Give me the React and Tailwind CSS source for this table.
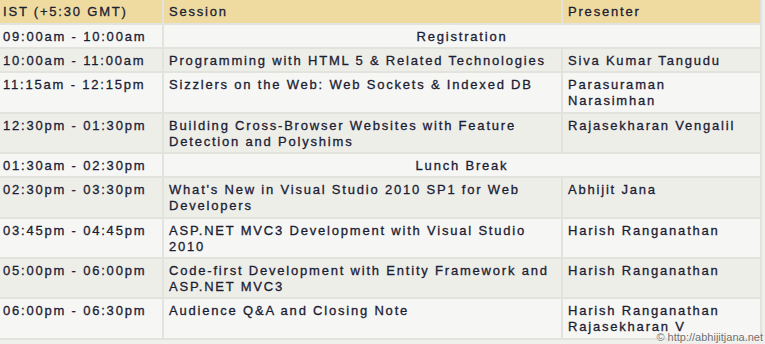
import React from "react"

const rows = [
  { time: "09:00am - 10:00am", span: "Registration", light: true },
  { time: "10:00am - 11:00am", session: ["Programming with HTML 5 & Related Technologies"], presenter: ["Siva Kumar Tangudu"] },
  { time: "11:15am - 12:15pm", session: ["Sizzlers on the Web: Web Sockets & Indexed DB"], presenter: ["Parasuraman", "Narasimhan"], light: true },
  { time: "12:30pm - 01:30pm", session: ["Building Cross-Browser Websites with Feature", "Detection and Polyshims"], presenter: ["Rajasekharan Vengalil"] },
  { time: "01:30am - 02:30pm", span: "Lunch Break", light: true },
  { time: "02:30pm - 03:30pm", session: ["What's New in Visual Studio 2010 SP1 for Web", "Developers"], presenter: ["Abhijit Jana"] },
  { time: "03:45pm - 04:45pm", session: ["ASP.NET MVC3 Development with Visual Studio", "2010"], presenter: ["Harish Ranganathan"], light: true },
  { time: "05:00pm - 06:00pm", session: ["Code-first Development with Entity Framework and", "ASP.NET MVC3"], presenter: ["Harish Ranganathan"] },
  { time: "06:00pm - 06:30pm", session: ["Audience Q&A and Closing Note"], presenter: ["Harish Ranganathan", "Rajasekharan V"], light: true },
]

const Lines = ({ lines }) =>
  lines.map((l, i) => (
    <div key={i} className="whitespace-nowrap">
      {l}
    </div>
  ))

export default function App() {
  return (
    <div
      className="relative w-[765px] h-[344px] bg-[#efefeb] overflow-hidden text-[13px] leading-4 tracking-[1.8px] text-[#1a2033] [-webkit-text-stroke:0.3px_#1a2033]"
      style={{ fontFamily: '"Liberation Sans", Arial, sans-serif' }}
    >
      <div className="grid w-[762px] grid-cols-[162px_397px_197px] grid-rows-[23px_22px_22px_39px_38px_22px_39px_38px_38px_39px] gap-[2px] bg-[#e2e3dc] pb-[2px]">
        {/* Header */}
        <div className="bg-[#efdb9f] pl-[3px] pt-[4px] whitespace-nowrap">IST (+5:30 GMT)</div>
        <div className="bg-[#efdb9f] pl-[5px] pt-[4px]">Session</div>
        <div className="bg-[#efdb9f] pl-[5px] pt-[4px]">Presenter</div>

        {rows.map((r, idx) => {
          const bg = r.light ? "bg-[#f6f6f4]" : "bg-[#eeeee9]"
          return (
            <React.Fragment key={idx}>
              <div className={`${bg} pl-[3px] pt-[4px] whitespace-nowrap`}>{r.time}</div>
              {r.span ? (
                <div className={`${bg} col-span-2 pt-[4px] text-center`}>{r.span}</div>
              ) : (
                <>
                  <div className={`${bg} pl-[5px] pt-[4px]`}>
                    <Lines lines={r.session} />
                  </div>
                  <div className={`${bg} pl-[5px] pt-[4px]`}>
                    <Lines lines={r.presenter} />
                  </div>
                </>
              )}
            </React.Fragment>
          )
        })}
      </div>

      {/* watermark */}
      <div className="absolute right-[2px] bottom-[0px] text-[11px] leading-[13px] tracking-normal text-[#6e6e6e] [-webkit-text-stroke:0] [text-shadow:0_0_2px_#fff,0_0_1px_#fff]">
        © http://abhijitjana.net
      </div>
    </div>
  )
}
